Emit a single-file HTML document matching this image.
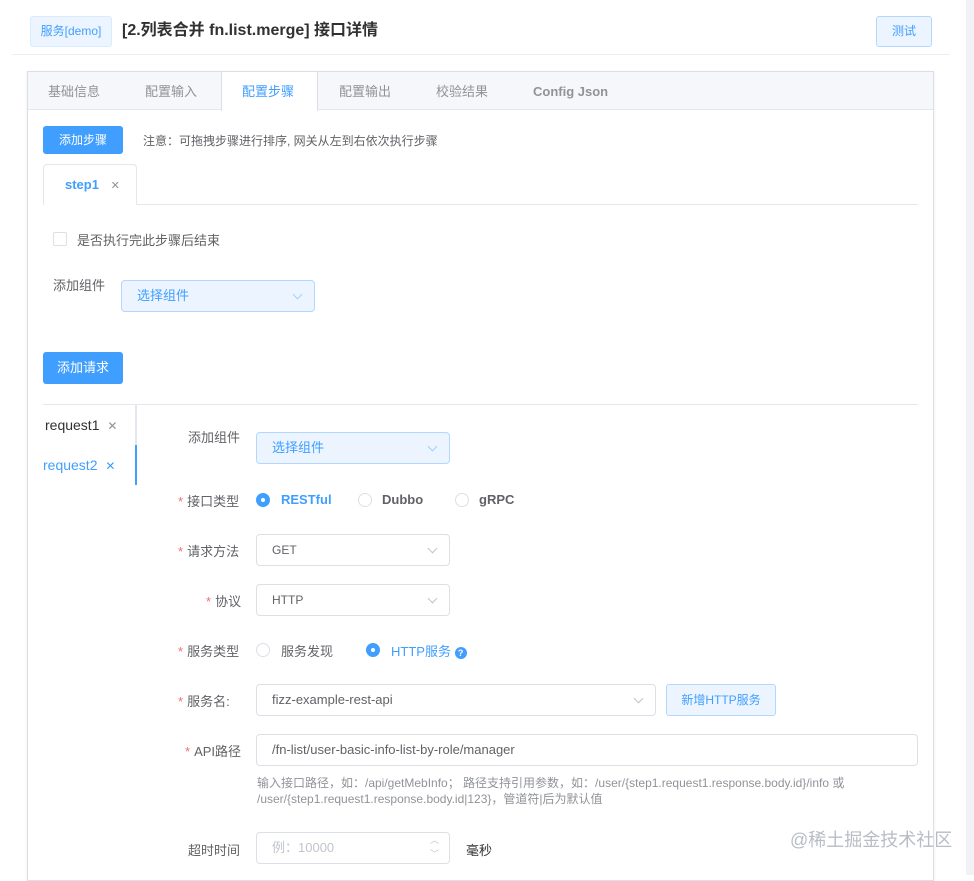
<!DOCTYPE html>
<html><head><meta charset="utf-8"><style>
*{box-sizing:border-box;margin:0;padding:0}
body{width:974px;height:875px;overflow:hidden;background:#fff;font-family:"Liberation Sans","Noto Sans CJK SC",sans-serif;font-size:13px;color:#606266;position:relative}
.a{position:absolute}
.tab{position:absolute;top:82px;line-height:20px;font-size:13px;color:#909399}
.sel{position:absolute;border:1px solid #dcdfe6;border-radius:4px;background:#fff;height:32px;padding:0 15px;line-height:30px;color:#606266}
.sel.blue{background:#ecf5ff;border-color:#b3d8ff;color:#409eff}
.arr{position:absolute;right:13px;top:10px;width:7px;height:7px;border-right:1px solid #c0c4cc;border-bottom:1px solid #c0c4cc;transform:rotate(45deg)}
.lbl{position:absolute;text-align:right;color:#606266;font-size:13px}
.st{color:#f56c6c;margin-right:4px}
.btn{position:absolute;background:#409eff;color:#fff;border-radius:3px;text-align:center;font-size:12px}
.radio{position:absolute;width:14px;height:14px;border-radius:50%;border:1px solid #dcdfe6;background:#fff}
.radio.on{background:#409eff;border-color:#409eff}
.radio.on:after{content:"";position:absolute;left:4px;top:4px;width:4px;height:4px;border-radius:50%;background:#fff}
</style></head><body>
<div class="a" style="left:966px;top:0;width:8px;height:875px;background:#f0f2f5"></div>
<div class="a" style="left:30px;top:16px;width:82px;height:31px;background:#ecf5ff;border:1px solid #d9ecff;border-radius:3px;color:#409eff;font-size:12px;line-height:29px;text-align:center">服务[demo]</div>
<div class="a" style="left:122px;top:20px;font-size:16px;font-weight:bold;color:#303133;line-height:22px">[2.列表合并 fn.list.merge] 接口详情</div>
<div class="a" style="left:876px;top:16px;width:56px;height:31px;background:#ecf5ff;border:1px solid #b3d8ff;border-radius:3px;color:#409eff;font-size:12px;line-height:29px;text-align:center">测试</div>
<div class="a" style="left:12px;top:54px;width:938px;height:1px;background:#ebeef5"></div>
<div class="a" style="left:27px;top:71px;width:907px;height:810px;border:1px solid #dcdfe6;box-shadow:0 1px 3px rgba(0,0,0,.08)"></div>
<div class="a" style="left:28px;top:72px;width:905px;height:38px;background:#f5f7fa;border-bottom:1px solid #e4e7ed"></div>
<div class="a" style="left:221px;top:72px;width:97px;height:39px;background:#fff;border-left:1px solid #dcdfe6;border-right:1px solid #dcdfe6"></div>
<div class="tab" style="left:48px">基础信息</div>
<div class="tab" style="left:145px">配置输入</div>
<div class="tab" style="left:242px;color:#409eff">配置步骤</div>
<div class="tab" style="left:339px">配置输出</div>
<div class="tab" style="left:436px">校验结果</div>
<div class="tab" style="left:533px;font-weight:bold">Config Json</div>
<div class="btn" style="left:43px;top:126px;width:80px;height:28px;line-height:28px">添加步骤</div>
<div class="a" style="left:143px;top:132px;font-size:12px;color:#606266">注意：可拖拽步骤进行排序, 网关从左到右依次执行步骤</div>
<div class="a" style="left:43px;top:204px;width:875px;height:1px;background:#e4e7ed"></div>
<div class="a" style="left:43px;top:164px;width:94px;height:41px;border:1px solid #e4e7ed;border-bottom:1px solid #fff;border-radius:4px 4px 0 0;background:#fff;color:#409eff;font-weight:bold;line-height:40px;padding-left:21px">step1 <span style="font-weight:normal;color:#909399;font-size:11px;margin-left:8px">✕</span></div>
<div class="a" style="left:53px;top:232px;width:14px;height:14px;border:1px solid #dcdfe6;border-radius:2px"></div>
<div class="a" style="left:77px;top:230px;color:#606266">是否执行完此步骤后结束</div>
<div class="lbl" style="left:53px;top:275px">添加组件</div>
<div class="sel blue" style="left:121px;top:280px;width:194px">选择组件<span class="arr" style="border-color:#a0cfff"></span></div>
<div class="btn" style="left:43px;top:352px;width:80px;height:32px;line-height:32px;font-size:13px">添加请求</div>
<div class="a" style="left:43px;top:404px;width:875px;height:1px;background:#e4e7ed"></div>
<div class="a" style="left:135px;top:405px;width:2px;height:80px;background:#e4e7ed"></div>
<div class="a" style="left:135px;top:445px;width:2px;height:40px;background:#409eff"></div>
<div class="a" style="left:45px;top:417px;color:#303133;font-size:14px">request1 <span style="color:#909399;font-size:12px;margin-left:4px">✕</span></div>
<div class="a" style="left:43px;top:457px;color:#409eff;font-size:14px">request2 <span style="font-size:12px;margin-left:4px">✕</span></div>
<div class="lbl" style="left:188px;top:427px">添加组件</div>
<div class="sel blue" style="left:256px;top:432px;width:194px">选择组件<span class="arr" style="border-color:#a0cfff"></span></div>
<div class="lbl" style="left:178px;top:491px"><span class="st">*</span>接口类型</div>
<div class="radio on" style="left:256px;top:493px"></div><div class="a" style="left:281px;top:492px;color:#409eff;font-weight:bold">RESTful</div>
<div class="radio" style="left:358px;top:493px"></div><div class="a" style="left:382px;top:492px;font-weight:bold">Dubbo</div>
<div class="radio" style="left:455px;top:493px"></div><div class="a" style="left:479px;top:492px;font-weight:bold">gRPC</div>
<div class="lbl" style="left:178px;top:541px"><span class="st">*</span>请求方法</div>
<div class="sel" style="left:256px;top:534px;width:194px;font-size:12px">GET<span class="arr"></span></div>
<div class="lbl" style="left:206px;top:591px"><span class="st">*</span>协议</div>
<div class="sel" style="left:256px;top:584px;width:194px;font-size:12px">HTTP<span class="arr"></span></div>
<div class="lbl" style="left:178px;top:641px"><span class="st">*</span>服务类型</div>
<div class="radio" style="left:256px;top:643px"></div><div class="a" style="left:281px;top:641px">服务发现</div>
<div class="radio on" style="left:366px;top:643px"></div><div class="a" style="left:391px;top:641px;color:#409eff">HTTP服务 <span style="display:inline-block;width:12px;height:12px;border-radius:50%;background:#409eff;color:#fff;font-size:9px;line-height:12px;text-align:center;font-weight:bold">?</span></div>
<div class="lbl" style="left:178px;top:691px"><span class="st">*</span>服务名:</div>
<div class="sel" style="left:256px;top:684px;width:400px">fizz-example-rest-api<span class="arr"></span></div>
<div class="a" style="left:666px;top:684px;width:110px;height:32px;background:#ecf5ff;border:1px solid #b3d8ff;border-radius:3px;color:#409eff;font-size:12px;line-height:30px;text-align:center">新增HTTP服务</div>
<div class="lbl" style="left:185px;top:741px"><span class="st">*</span>API路径</div>
<div class="sel" style="left:256px;top:734px;width:662px">/fn-list/user-basic-info-list-by-role/manager</div>
<div class="a" style="left:257px;top:775px;font-size:12px;color:#909399;line-height:16px;width:620px">输入接口路径，如：/api/getMebInfo； 路径支持引用参数，如：/user/{step1.request1.response.body.id}/info 或 /user/{step1.request1.response.body.id|123}，管道符|后为默认值</div>
<div class="lbl" style="left:188px;top:840px">超时时间</div>
<div class="sel" style="left:256px;top:832px;width:194px;color:#c0c4cc">例：10000<span class="a" style="right:10px;top:0;font-size:9px;color:#c0c4cc;line-height:14px">︿<br>﹀</span></div>
<div class="a" style="left:466px;top:840px;color:#303133">毫秒</div>
<div class="a" style="left:790px;top:826px;font-size:18px;color:#b8bcc4">@稀土掘金技术社区</div>
</body></html>
